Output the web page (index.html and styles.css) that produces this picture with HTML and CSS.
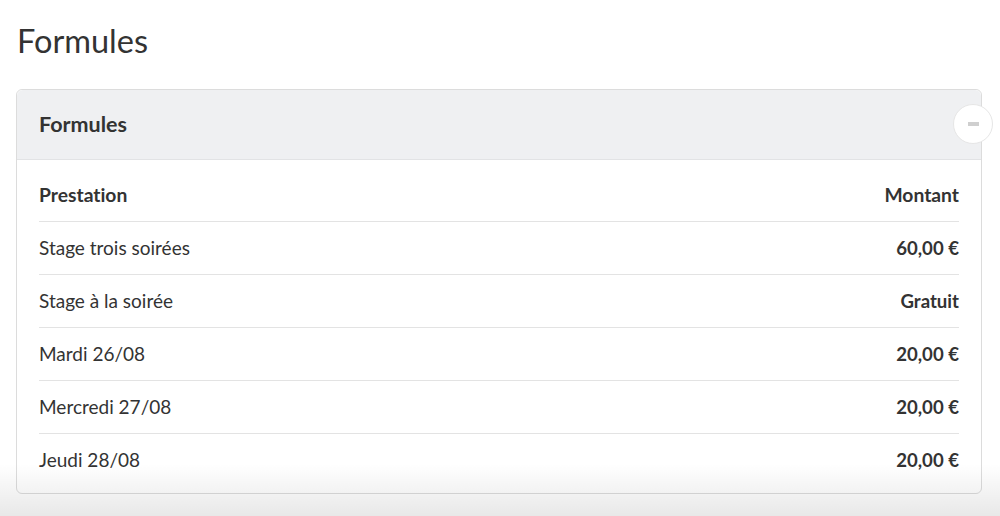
FILE: index.html
```html
<!DOCTYPE html>
<html lang="fr">
<head>
<meta charset="utf-8">
<title>Formules</title>
<link rel="stylesheet" href="styles.css">
</head>
<body>
<h1 class="page-title">Formules</h1>
<section class="card">
  <header class="card-header">
    <h2 class="card-title">Formules</h2>
    <button class="collapse-btn" aria-label="Réduire"><span class="minus"></span></button>
  </header>
  <div class="card-body">
    <table class="prices">
      <thead>
        <tr><th class="col-name">Prestation</th><th class="col-amount">Montant</th></tr>
      </thead>
      <tbody>
        <tr><td>Stage trois soirées</td><td class="amount">60,00 €</td></tr>
        <tr><td>Stage à la soirée</td><td class="amount">Gratuit</td></tr>
        <tr><td>Mardi 26/08</td><td class="amount">20,00 €</td></tr>
        <tr><td>Mercredi 27/08</td><td class="amount">20,00 €</td></tr>
        <tr><td>Jeudi 28/08</td><td class="amount">20,00 €</td></tr>
      </tbody>
    </table>
  </div>
</section>
<div class="fade"></div>
</body>
</html>
```
FILE: styles.css
```css
* { box-sizing: border-box; }
html, body { margin: 0; padding: 0; }
body {
  background: #fff;
  font-family: Lato, "Open Sans", sans-serif;
  font-variant-ligatures: none;
  color: #333;
  padding: 0 18px 0 16px;
  height: 516px;
  overflow: hidden;
  position: relative;
}
.page-title {
  font-size: 32.5px;
  font-weight: 400;
  line-height: 40px;
  margin: 21px 0 28px 1px;
  color: #333;
}
.card {
  border: 1px solid #dcdcdc;
  border-radius: 6px;
  background: #fff;
  position: relative;
}
.card-header {
  height: 70px;
  background: #eff0f2;
  border-bottom: 1px solid #e2e3e5;
  border-radius: 6px 6px 0 0;
  display: flex;
  align-items: center;
  padding: 0 22px 2px;
}
.card-title {
  margin: 0;
  font-size: 21.5px;
  font-weight: 700;
  color: #333;
}
.collapse-btn {
  position: absolute;
  top: 14px;
  right: -12px;
  width: 40px;
  height: 40px;
  border-radius: 50%;
  background: #fff;
  border: 1px solid #e6e6e6;
  display: flex;
  align-items: center;
  justify-content: center;
  padding: 0;
}
.minus {
  width: 11px;
  height: 4px;
  background: #cfcfcf;
}
.card-body {
  padding: 8px 22px 7px;
}
.prices {
  width: 100%;
  border-collapse: collapse;
  font-size: 19px;
}
.prices th, .prices td {
  height: 53px;
  padding: 0;
  text-align: left;
  vertical-align: middle;
}
.prices th { font-weight: 700; font-size: 19.3px; }
.prices tbody tr { border-top: 1px solid #e3e3e3; }
.prices .col-amount, .prices .amount {
  text-align: right;
  font-weight: 700;
}
.prices .amount { font-size: 18.6px; }
.fade {
  position: absolute;
  left: 0;
  right: 0;
  bottom: 0;
  height: 52px;
  background: linear-gradient(to bottom, rgba(0,0,0,0), rgba(0,0,0,0.09));
  pointer-events: none;
}
```
